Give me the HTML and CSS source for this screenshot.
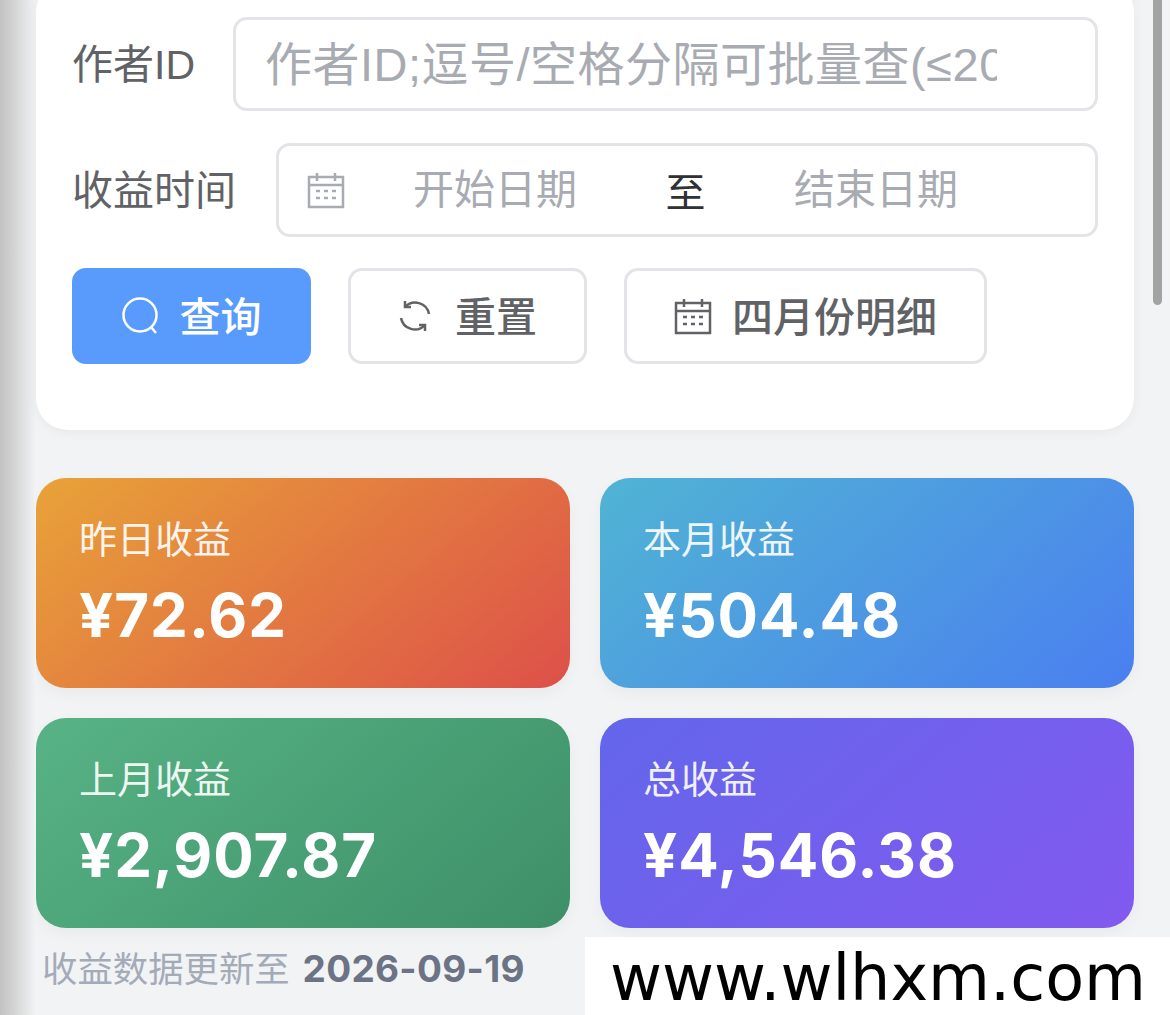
FILE: index.html
```html
<!DOCTYPE html>
<html lang="zh-CN">
<head>
    <meta charset="UTF-8">
    <meta name="viewport" content="width=device-width, initial-scale=1.0">
    <title>收益查询</title>
    <link rel="stylesheet" href="styles.css">
</head>
<body>

<div class="edge"></div>
<div class="scrollbar"></div>

<div class="page">
    <!-- 查询表单 -->
    <div class="card">
        <div class="row">
            <label class="label">作者ID</label>
            <input class="text-input" type="text" placeholder="作者ID;逗号/空格分隔可批量查(≤200)">
        </div>
        <div class="row row-date">
            <label class="label">收益时间</label>
            <div class="date-box">
                <svg class="icon date-icon" viewBox="0 0 38 38">
                    <path d="M2 6h34v30H2zM2 14h34M10 2v8M28 2v8"/>
                    <path class="dots" d="M9 20h4M17 20h4M25 20h4M9 27h4M17 27h4M25 27h4"/>
                </svg>
                <input class="date-input" type="text" placeholder="开始日期">
                <span class="date-sep">至</span>
                <input class="date-input" type="text" placeholder="结束日期">
            </div>
        </div>
        <div class="buttons">
            <button class="btn btn-primary">
                <svg class="icon" viewBox="0 0 38 38">
                    <circle cx="18" cy="18" r="16.5"/>
                    <path d="M29 30l5 6"/>
                </svg>
                <span class="btn-text">查询</span>
            </button>
            <button class="btn btn-reset">
                <svg class="icon icon-small" viewBox="0 0 34 34">
                    <path d="M31 15A14 14 0 0 0 7 8M3 19A14 14 0 0 0 27 26"/>
                    <path d="M7 2v6h6M27 32v-6h-6"/>
                </svg>
                <span class="btn-text">重置</span>
            </button>
            <button class="btn">
                <svg class="icon" viewBox="0 0 38 38">
                    <path d="M2 6h34v30H2zM2 14h34M10 2v8M28 2v8"/>
                    <path class="dots" d="M9 20h4M17 20h4M25 20h4M9 27h4M17 27h4M25 27h4"/>
                </svg>
                <span class="btn-text">四月份明细</span>
            </button>
        </div>
    </div>

    <!-- 收益统计 -->
    <div class="stats">
        <div class="stat stat-orange">
            <div class="stat-title">昨日收益</div>
            <div class="stat-value">¥72.62</div>
        </div>
        <div class="stat stat-blue">
            <div class="stat-title">本月收益</div>
            <div class="stat-value">¥504.48</div>
        </div>
        <div class="stat stat-green">
            <div class="stat-title">上月收益</div>
            <div class="stat-value">¥2,907.87</div>
        </div>
        <div class="stat stat-purple">
            <div class="stat-title">总收益</div>
            <div class="stat-value">¥4,546.38</div>
        </div>
    </div>

    <p class="note">收益数据更新至 <b>2026-09-19</b></p>
</div>

<div class="watermark">www.wlhxm.com</div>

</body>
</html>
```

FILE: styles.css
```css
* {
    box-sizing: border-box;
}
html, body {
    height: 100%;
}
body {
    margin: 0;
    overflow: hidden;
    background-color: #f2f3f5;
    font-family: "Liberation Sans", "Noto Sans CJK SC", sans-serif;
}
.page {
    padding: 0 36px;
}

/* 左边的阴影和滚动条 */
.edge {
    position: absolute;
    left: 0;
    top: 0;
    bottom: 0;
    width: 36px;
    background: linear-gradient(to right, #c2c2c2, #d4d4d4 40%, #f2f3f5);
}
.scrollbar {
    position: absolute;
    left: 1153px;
    top: 0;
    width: 9px;
    height: 305px;
    border-radius: 0 0 5px 5px;
    background-color: #a3a3a3;
}

/* 表单卡片 */
.card {
    position: relative;
    height: 450px;
    margin-top: -20px;
    padding: 37px 36px 0;
    background-color: #fff;
    border-radius: 32px;
    box-shadow: 0 2px 12px rgba(0, 0, 0, 0.05);
}
.row {
    display: flex;
    align-items: center;
    height: 94px;
    margin-bottom: 32px;
}
.label {
    flex: none;
    margin-right: 38px;
    padding-bottom: 6px;
    font-size: 41px;
    color: #606266;
}
.text-input {
    flex: 1;
    min-width: 0;
    height: 94px;
    padding: 0 98px 0 29px;
    border: 3px solid #e3e4e7;
    border-radius: 14px;
    outline: none;
    background: #fff;
    font-family: inherit;
    font-size: 47px;
    letter-spacing: 0.5px;
}
.text-input::placeholder,
.date-input::placeholder {
    color: #a8abb2;
    opacity: 1;
}
.row-date {
    margin-bottom: 31px;
}
.row-date .label {
    margin-right: 40px;
}
.date-box {
    flex: 1;
    display: flex;
    align-items: center;
    height: 94px;
    padding-left: 28px;
    border: 3px solid #e3e4e7;
    border-radius: 14px;
}
.date-icon {
    color: #a8abb2;
}
.date-input {
    width: 300px;
    padding-top: 2px;
    border: none;
    outline: none;
    background: none;
    text-align: center;
    font-family: inherit;
    font-size: 41px;
}
.date-sep {
    width: 81px;
    text-align: center;
    font-size: 40px;
    color: #303133;
}

/* 按钮 */
.buttons {
    display: flex;
    gap: 37px;
}
.btn {
    display: flex;
    align-items: center;
    justify-content: center;
    gap: 20px;
    height: 96px;
    padding: 0 47px;
    border: 3px solid #e3e4e7;
    border-radius: 14px;
    background-color: #fff;
    color: #606266;
    font-family: inherit;
    font-size: 41px;
    font-weight: 500;
}
.btn-text {
    margin-bottom: 4px;
}
.btn-primary {
    padding: 0 46.5px;
    border-color: #589bfd;
    background-color: #589bfd;
    color: #fff;
}
.btn-reset {
    gap: 23px;
}
.icon {
    flex: none;
    width: 38px;
    height: 38px;
    fill: none;
    stroke: currentColor;
    stroke-width: 2.5;
}
.icon-small {
    width: 34px;
    height: 34px;
}
.dots {
    stroke-width: 2.5;
}

/* 统计卡片 */
.stats {
    display: grid;
    grid-template-columns: 534px 534px;
    grid-auto-rows: 210px;
    gap: 30px;
    margin-top: 48px;
}
.stat {
    padding: 34px 43px 0;
    border-radius: 30px;
    color: #fff;
    box-shadow: 0 6px 16px rgba(0, 0, 0, 0.04);
}
.stat-orange {
    background: linear-gradient(140deg, #e8a338, #dd5049);
}
.stat-blue {
    background: linear-gradient(140deg, #50b4d3, #4a7ff0);
}
.stat-green {
    background: linear-gradient(140deg, #57b386, #3e8f67);
}
.stat-purple {
    background: linear-gradient(140deg, #6366ea, #8259f0);
}
.stat-title {
    font-size: 38px;
    line-height: 56px;
    opacity: 0.9;
}
.stat-value {
    margin-top: 9px;
    font-family: Inter, "Noto Sans", sans-serif;
    font-size: 60px;
    font-weight: 700;
    letter-spacing: 1px;
    line-height: 76px;
}

.note {
    margin: 16px 0 0 6px;
    font-size: 35.4px;
    line-height: 50px;
    color: #a4abb8;
}
.note b {
    margin-left: 3px;
    font-family: Inter, "Noto Sans", sans-serif;
    font-size: 37px;
    letter-spacing: 0.3px;
    color: #6b7385;
}

/* 水印 */
.watermark {
    position: absolute;
    left: 585px;
    top: 937px;
    width: 585px;
    height: 78px;
    padding-left: 25px;
    background-color: #fff;
    font-family: "DejaVu Sans", sans-serif;
    font-size: 63.6px;
    line-height: 82px;
    color: #000;
}
```
